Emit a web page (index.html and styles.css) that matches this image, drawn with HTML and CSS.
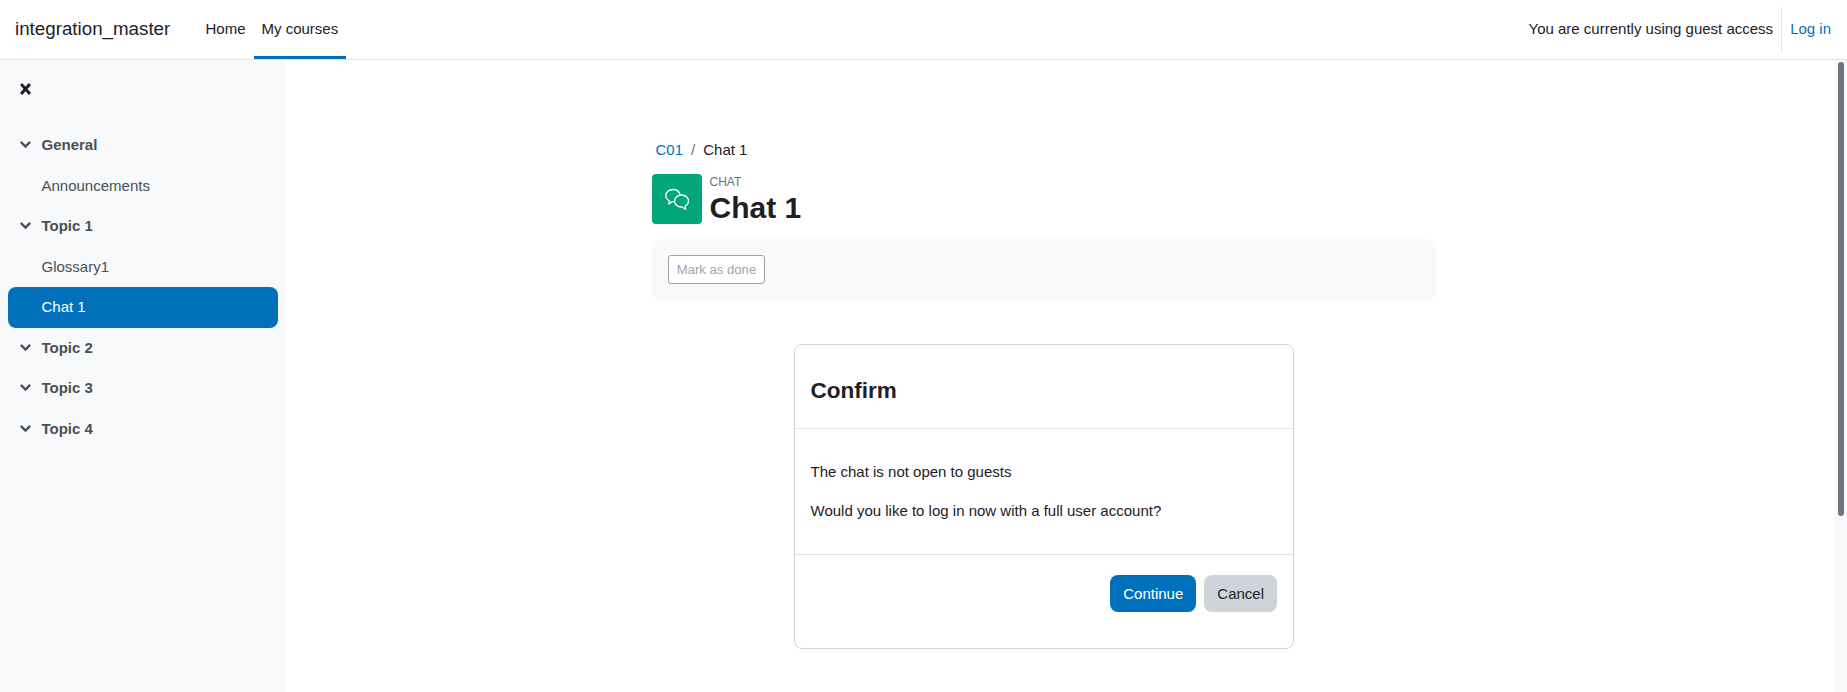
FILE: index.html
```html
<!DOCTYPE html>
<html>
<head>
    <title>Chat 1</title>
    <link rel="stylesheet" href="styles.css">
</head>
<body>
<nav class="navbar">
    <a class="brand" href="#">integration_master</a>
    <div class="nav-tabs">
        <a class="nav-tab" href="#">Home</a>
        <a class="nav-tab active" href="#">My courses</a>
    </div>
    <div class="nav-user">
        <span class="guest-text">You are currently using guest access</span>
        <span class="login-box"><a href="#">Log in</a></span>
    </div>
</nav>

<div class="page">
    <aside class="drawer">
        <div class="drawer-head">
            <svg class="close-icon" viewBox="0 0 11 12"><path d="M2.100 2.200L8.900 9.800M8.900 2.200L2.100 9.800"/></svg>
        </div>
        <ul class="course-index">
            <li class="section"><svg class="chevron" viewBox="0 0 11 8"><path d="M1.700 1.800L5.500 5.600L9.300 1.800"/></svg>General</li>
            <li class="item">Announcements</li>
            <li class="section"><svg class="chevron" viewBox="0 0 11 8"><path d="M1.700 1.800L5.500 5.600L9.300 1.800"/></svg>Topic 1</li>
            <li class="item">Glossary1</li>
            <li class="item current">Chat 1</li>
            <li class="section"><svg class="chevron" viewBox="0 0 11 8"><path d="M1.700 1.800L5.500 5.600L9.300 1.800"/></svg>Topic 2</li>
            <li class="section"><svg class="chevron" viewBox="0 0 11 8"><path d="M1.700 1.800L5.500 5.600L9.300 1.800"/></svg>Topic 3</li>
            <li class="section"><svg class="chevron" viewBox="0 0 11 8"><path d="M1.700 1.800L5.500 5.600L9.300 1.800"/></svg>Topic 4</li>
        </ul>
    </aside>

    <main class="main">
        <div class="content">
            <div class="breadcrumb"><a href="#">C01</a><span class="sep">/</span><span>Chat 1</span></div>
            <div class="page-head">
                <div class="mod-icon">
                    <svg viewBox="0 0 24 24" fill="none" stroke="#fff" stroke-width="1.300" stroke-linejoin="round">
                        <path d="M15 7.800C14.400 4.600 11.500 2.500 8 2.500C3.900 2.500 .8 5.200 .8 8.500C.8 10.800 2.200 12.600 4.200 13.600L3.800 17L7.200 14.600L8.800 14.600"/>
                        <path d="M16.500 8C12.600 8 9.500 10.600 9.500 14C9.500 17.400 12.600 20 16.500 20L17 20L20.600 22.300L20.200 18.900C22.300 17.900 23.500 16.100 23.500 14C23.500 10.600 20.400 8 16.500 8Z"/>
                    </svg>
                </div>
                <div class="head-text">
                    <div class="mod-type">CHAT</div>
                    <h1>Chat 1</h1>
                </div>
            </div>
            <div class="activity-bar">
                <button class="mark-btn" disabled>Mark as done</button>
            </div>
            <div class="confirm">
                <h4 class="confirm-head">Confirm</h4>
                <div class="confirm-body">
                    <p>The chat is not open to guests</p>
                    <p>Would you like to log in now with a full user account?</p>
                </div>
                <div class="confirm-foot">
                    <button class="btn btn-primary">Continue</button>
                    <button class="btn btn-secondary">Cancel</button>
                </div>
            </div>
        </div>
    </main>

    <div class="scrollbar"><div class="scrollbar-thumb"></div></div>
</div>
</body>
</html>
```

FILE: styles.css
```css
* {
    box-sizing: border-box;
}

html,
body {
    height: 100%;
}

body {
    margin: 0;
    overflow: hidden;
    font-family: "Liberation Sans", Arial, sans-serif;
    font-size: 15px;
    line-height: 1.5;
    color: #1d2125;
    background-color: #fff;
}

a {
    color: #0070bb;
    text-decoration: none;
}

/* top bar */
.navbar {
    display: flex;
    align-items: center;
    height: 60px;
    padding-left: 15px;
    padding-right: 16px;
    border-bottom: 1px solid #dee2e6;
}

.brand {
    font-size: 18.75px;
    color: #1d2125;
    margin-right: 27.200px;
}

.nav-tabs {
    display: flex;
    height: 59px;
}

.nav-tab {
    display: flex;
    align-items: center;
    padding: 3px 8px 0;
    color: #1d2125;
    border-bottom: 3px solid transparent;
}

.nav-tab.active {
    border-bottom-color: #0070bb;
}

.nav-user {
    display: flex;
    align-items: center;
    margin-left: auto;
}

.guest-text {
    padding-right: 8px;
}

.login-box {
    display: flex;
    align-items: center;
    height: 45px;
    padding-left: 8px;
    border-left: 1px solid #dee2e6;
}

/* layout */
.page {
    display: flex;
    height: 632px;
}

.drawer {
    width: 285px;
    flex-shrink: 0;
    background-color: #f8f9fa;
}

.drawer-head {
    display: flex;
    align-items: center;
    height: 58px;
    padding-left: 20px;
}

.close-icon {
    width: 11px;
    height: 12px;
    fill: none;
    stroke: #1d2125;
    stroke-width: 3;
    stroke-linecap: square;
}

.course-index {
    list-style: none;
    margin: 7px 0 0;
    padding: 0 7px 0 8px;
    color: #495057;
}

.course-index li {
    display: flex;
    align-items: center;
    height: 40.5px;
}

.section {
    font-weight: bold;
    padding-left: 12px;
}

.chevron {
    width: 11px;
    height: 8px;
    margin-right: 10.500px;
    fill: none;
    stroke: #495057;
    stroke-width: 2.400;
    stroke-linecap: square;
}

.item {
    padding-left: 33.5px;
}

.course-index .current {
    color: #fff;
    background-color: #0070bb;
    border-radius: 8px;
}

.main {
    flex: 1;
    display: flex;
    justify-content: center;
    padding-right: 32px;
}

.content {
    width: 784px;
    padding-top: 79px;
}

.breadcrumb {
    padding-left: 3.500px;
    height: 22px;
}

.sep {
    padding: 0 8px;
    color: #6a737b;
}

.page-head {
    display: flex;
    height: 50px;
    margin-top: 13px;
}

.mod-icon {
    display: flex;
    align-items: center;
    justify-content: center;
    width: 50px;
    height: 50px;
    background-color: #03a678;
    border-radius: 4px;
}

.mod-icon svg {
    width: 24px;
    height: 24px;
}

.head-text {
    margin-left: 7.500px;
    padding-top: 1px;
}

.mod-type {
    font-size: 12px;
    line-height: 14px;
    color: #6a737b;
}

h1 {
    margin: 1px 0 0;
    font-size: 30px;
    line-height: 36px;
    font-weight: bold;
}

.activity-bar {
    height: 61px;
    margin-top: 15px;
    padding: 16px;
    background-color: #f8f9fa;
    border-radius: 8px;
}

.mark-btn {
    display: block;
    height: 29px;
    width: 97px;
    padding: 0;
    font-family: inherit;
    font-size: 13.125px;
    color: #a0a4a8;
    background: #fff;
    border: 1px solid #9ca1a6;
    border-radius: 3px;
}

/* confirm box */
.confirm {
    width: 500px;
    height: 305px;
    margin: 44px auto 0;
    border: 1px solid #ced4da;
    border-radius: 8px;
}

.confirm-head {
    height: 84px;
    margin: 0;
    padding: 32px 15.500px 0;
    font-size: 22.5px;
    line-height: 27px;
    font-weight: bold;
    border-bottom: 1px solid #dee2e6;
}

.confirm-body {
    height: 126px;
    padding: 32px 15.500px 0;
    border-bottom: 1px solid #dee2e6;
}

.confirm-body p {
    margin: 0 0 16px;
}

.confirm-foot {
    display: flex;
    justify-content: flex-end;
    gap: 8px;
    padding: 20px 16px 0;
}

.btn {
    height: 37px;
    padding: 0 13px 1px;
    font-family: inherit;
    font-size: 15px;
    border: 0;
    border-radius: 8px;
}

.btn-primary {
    color: #fff;
    background-color: #0070bb;
}

.btn-secondary {
    color: #1d2125;
    background-color: #ced4da;
}

.scrollbar {
    width: 12px;
    flex-shrink: 0;
    padding: 2px 3px 0;
    background-color: #f8f9fa;
}

.scrollbar-thumb {
    height: 454px;
    background-color: #6c757d;
    border-radius: 3px;
}
```
